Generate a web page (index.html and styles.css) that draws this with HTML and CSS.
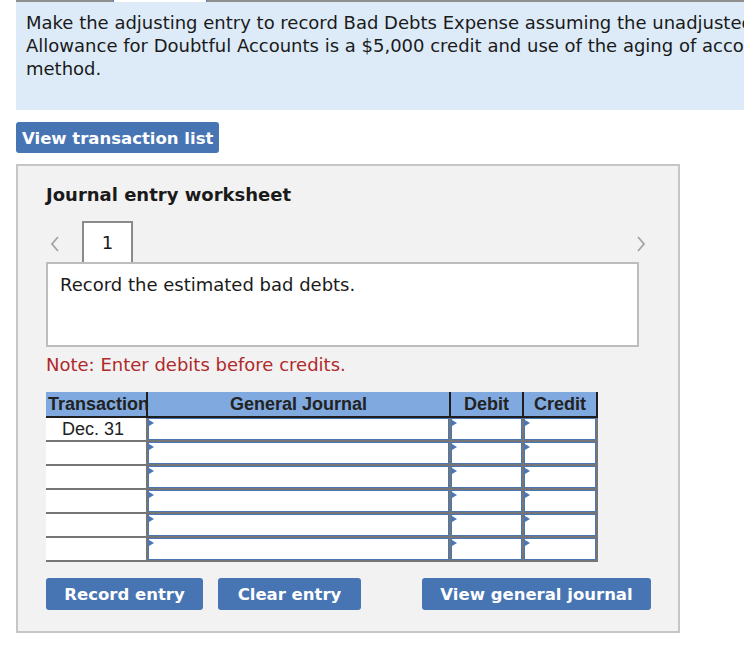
FILE: index.html
```html
<!DOCTYPE html>
<html lang="en">
<head>
    <meta charset="UTF-8">
    <title>Journal entry worksheet</title>
    <link rel="stylesheet" href="styles.css">
</head>
<body>
    <div class="page">
        <div class="strip">
            <span class="strip-gray first"></span>
            <span class="strip-active"></span>
            <span class="strip-gray"></span>
        </div>

        <div class="question">
            Make the adjusting entry to record Bad Debts Expense assuming the unadjusted balance in<br>
            Allowance for Doubtful Accounts is a $5,000 credit and use of the aging of accounts receivable<br>
            method.
        </div>

        <button class="btn btn-list">View transaction list</button>

        <div class="worksheet">
            <h2>Journal entry worksheet</h2>

            <div class="nav">
                <svg class="chevron" width="10" height="18" viewBox="0 0 10 18">
                    <polyline points="8,2 2,9 8,16" fill="none" stroke="#a3a3a3" stroke-width="1.8"/>
                </svg>
                <div class="tab">1</div>
                <svg class="chevron chevron-right" width="10" height="18" viewBox="0 0 10 18">
                    <polyline points="2,2 8,9 2,16" fill="none" stroke="#a3a3a3" stroke-width="1.8"/>
                </svg>
            </div>

            <div class="description">Record the estimated bad debts.</div>

            <p class="note">Note: Enter debits before credits.</p>

            <table class="journal">
                <colgroup>
                    <col class="c-trans">
                    <col class="c-gj">
                    <col class="c-debit">
                    <col class="c-credit">
                </colgroup>
                <thead>
                    <tr>
                        <th class="th-trans">Transaction</th>
                        <th>General Journal</th>
                        <th>Debit</th>
                        <th>Credit</th>
                    </tr>
                </thead>
                <tbody>
                    <tr>
                        <td class="trans">Dec. 31</td>
                        <td><div class="field"></div></td>
                        <td><div class="field"></div></td>
                        <td><div class="field"></div></td>
                    </tr>
                    <tr>
                        <td class="trans"></td>
                        <td><div class="field"></div></td>
                        <td><div class="field"></div></td>
                        <td><div class="field"></div></td>
                    </tr>
                    <tr>
                        <td class="trans"></td>
                        <td><div class="field"></div></td>
                        <td><div class="field"></div></td>
                        <td><div class="field"></div></td>
                    </tr>
                    <tr>
                        <td class="trans"></td>
                        <td><div class="field"></div></td>
                        <td><div class="field"></div></td>
                        <td><div class="field"></div></td>
                    </tr>
                    <tr>
                        <td class="trans"></td>
                        <td><div class="field"></div></td>
                        <td><div class="field"></div></td>
                        <td><div class="field"></div></td>
                    </tr>
                    <tr>
                        <td class="trans"></td>
                        <td><div class="field"></div></td>
                        <td><div class="field"></div></td>
                        <td><div class="field"></div></td>
                    </tr>
                </tbody>
            </table>

            <div class="actions">
                <button class="btn btn-action btn-record">Record entry</button>
                <button class="btn btn-action btn-clear">Clear entry</button>
                <button class="btn btn-action btn-journal">View general journal</button>
            </div>
        </div>
    </div>
</body>
</html>
```

FILE: styles.css
```css
html, body {
    margin: 0;
    padding: 0;
    overflow: hidden;
    background: #fff;
}
body {
    font-family: "DejaVu Sans", Verdana, sans-serif;
    color: #1a1a1a;
}
.page {
    padding-left: 16px;
    width: 1100px;
}
.strip {
    display: flex;
    height: 2px;
}
.strip-gray {
    background-color: #8f8f8f;
    flex: 1;
}
.strip-gray.first {
    flex: 0 0 97px;
}
.strip-active {
    flex: 0 0 92px;
    background-color: #fff;
    border-left: 1px solid #4a77b4;
    border-right: 1px solid #4a77b4;
}
.question {
    background-color: #ddebf8;
    font-size: 18px;
    line-height: 23px;
    padding: 9px 10px 30px;
    white-space: nowrap;
}
.btn {
    border: none;
    background-color: #4775b3;
    color: #fff;
    border-radius: 3px;
    cursor: pointer;
    font-family: "DejaVu Sans", Verdana, sans-serif;
    font-weight: bold;
    font-size: 16.5px;
    white-space: nowrap;
}
.btn-list {
    display: block;
    margin-top: 12px;
    height: 31px;
    width: 203px;
    padding: 2px 0 0 6px;
    text-align: left;
}
.worksheet {
    margin-top: 11px;
    width: 632px;
    background-color: #f2f2f2;
    border: 2px solid #c6c6c6;
    padding: 18px 0 21px 28px;
}
.worksheet h2 {
    margin: 0;
    font-size: 18px;
    line-height: 22px;
    font-weight: bold;
}
.nav {
    display: flex;
    align-items: center;
    margin-top: 15px;
    margin-right: 32px;
    height: 41px;
}
.chevron {
    margin-left: 4px;
    margin-top: 4px;
}
.chevron-right {
    margin-left: auto;
}
.tab {
    margin-left: 22px;
    width: 47px;
    height: 39px;
    border: 2px solid #8a8a8a;
    border-bottom: none;
    background: #fff;
    font-size: 18px;
    text-align: center;
    line-height: 40px;
    align-self: flex-end;
}
.description {
    width: 565px;
    height: 61px;
    background: #fff;
    border: 2px solid #bdbdbd;
    padding: 10px 12px;
    font-size: 18px;
    line-height: 22px;
}
.note {
    margin: 7px 0 0;
    color: #b0292b;
    font-size: 18px;
    line-height: 22px;
}
.journal {
    margin-top: 16px;
    border-collapse: separate;
    border-spacing: 0;
    table-layout: fixed;
    width: 552px;
    font-family: "Liberation Sans", Arial, sans-serif;
    font-size: 18px;
    color: #222;
}
.c-trans { width: 100px; }
.c-gj { width: 303px; }
.c-debit { width: 73px; }
.c-credit { width: 76px; }
.journal th {
    background-color: #80aadf;
    height: 24px;
    line-height: 22px;
    padding: 0;
    font-weight: bold;
    border-bottom: 2px solid #1e1e1e;
    border-left: 2px solid #1e1e1e;
    text-align: center;
    white-space: nowrap;
}
.journal th:last-child {
    border-right: 2px solid #1e1e1e;
}
.journal th.th-trans {
    border-left: none;
    text-align: left;
    padding-left: 2px;
}
.journal td {
    padding: 0;
    height: 22px;
    line-height: 21px;
    border-bottom: 2px solid #767676;
    border-left: 2px solid #767676;
    background-color: #767676;
}
.journal td:last-child {
    border-right: 2px solid #767676;
}
.journal td.trans {
    border-left: none;
    background: #fff;
    text-align: center;
    padding-right: 6px;
}
.field {
    position: relative;
    height: 20px;
    border: 1px solid #4a77b4;
    background: #fff;
}
.field::before {
    content: "";
    position: absolute;
    left: 0;
    top: 1px;
    border-left: 5px solid #4a77b4;
    border-top: 3px solid transparent;
    border-bottom: 3px solid transparent;
}
.actions {
    display: flex;
    margin-top: 16px;
}
.btn-action {
    height: 32px;
    padding: 1px 0 0;
}
.btn-record { width: 157px; }
.btn-clear { width: 143px; margin-left: 15px; }
.btn-journal { width: 229px; margin-left: 61px; }
```
